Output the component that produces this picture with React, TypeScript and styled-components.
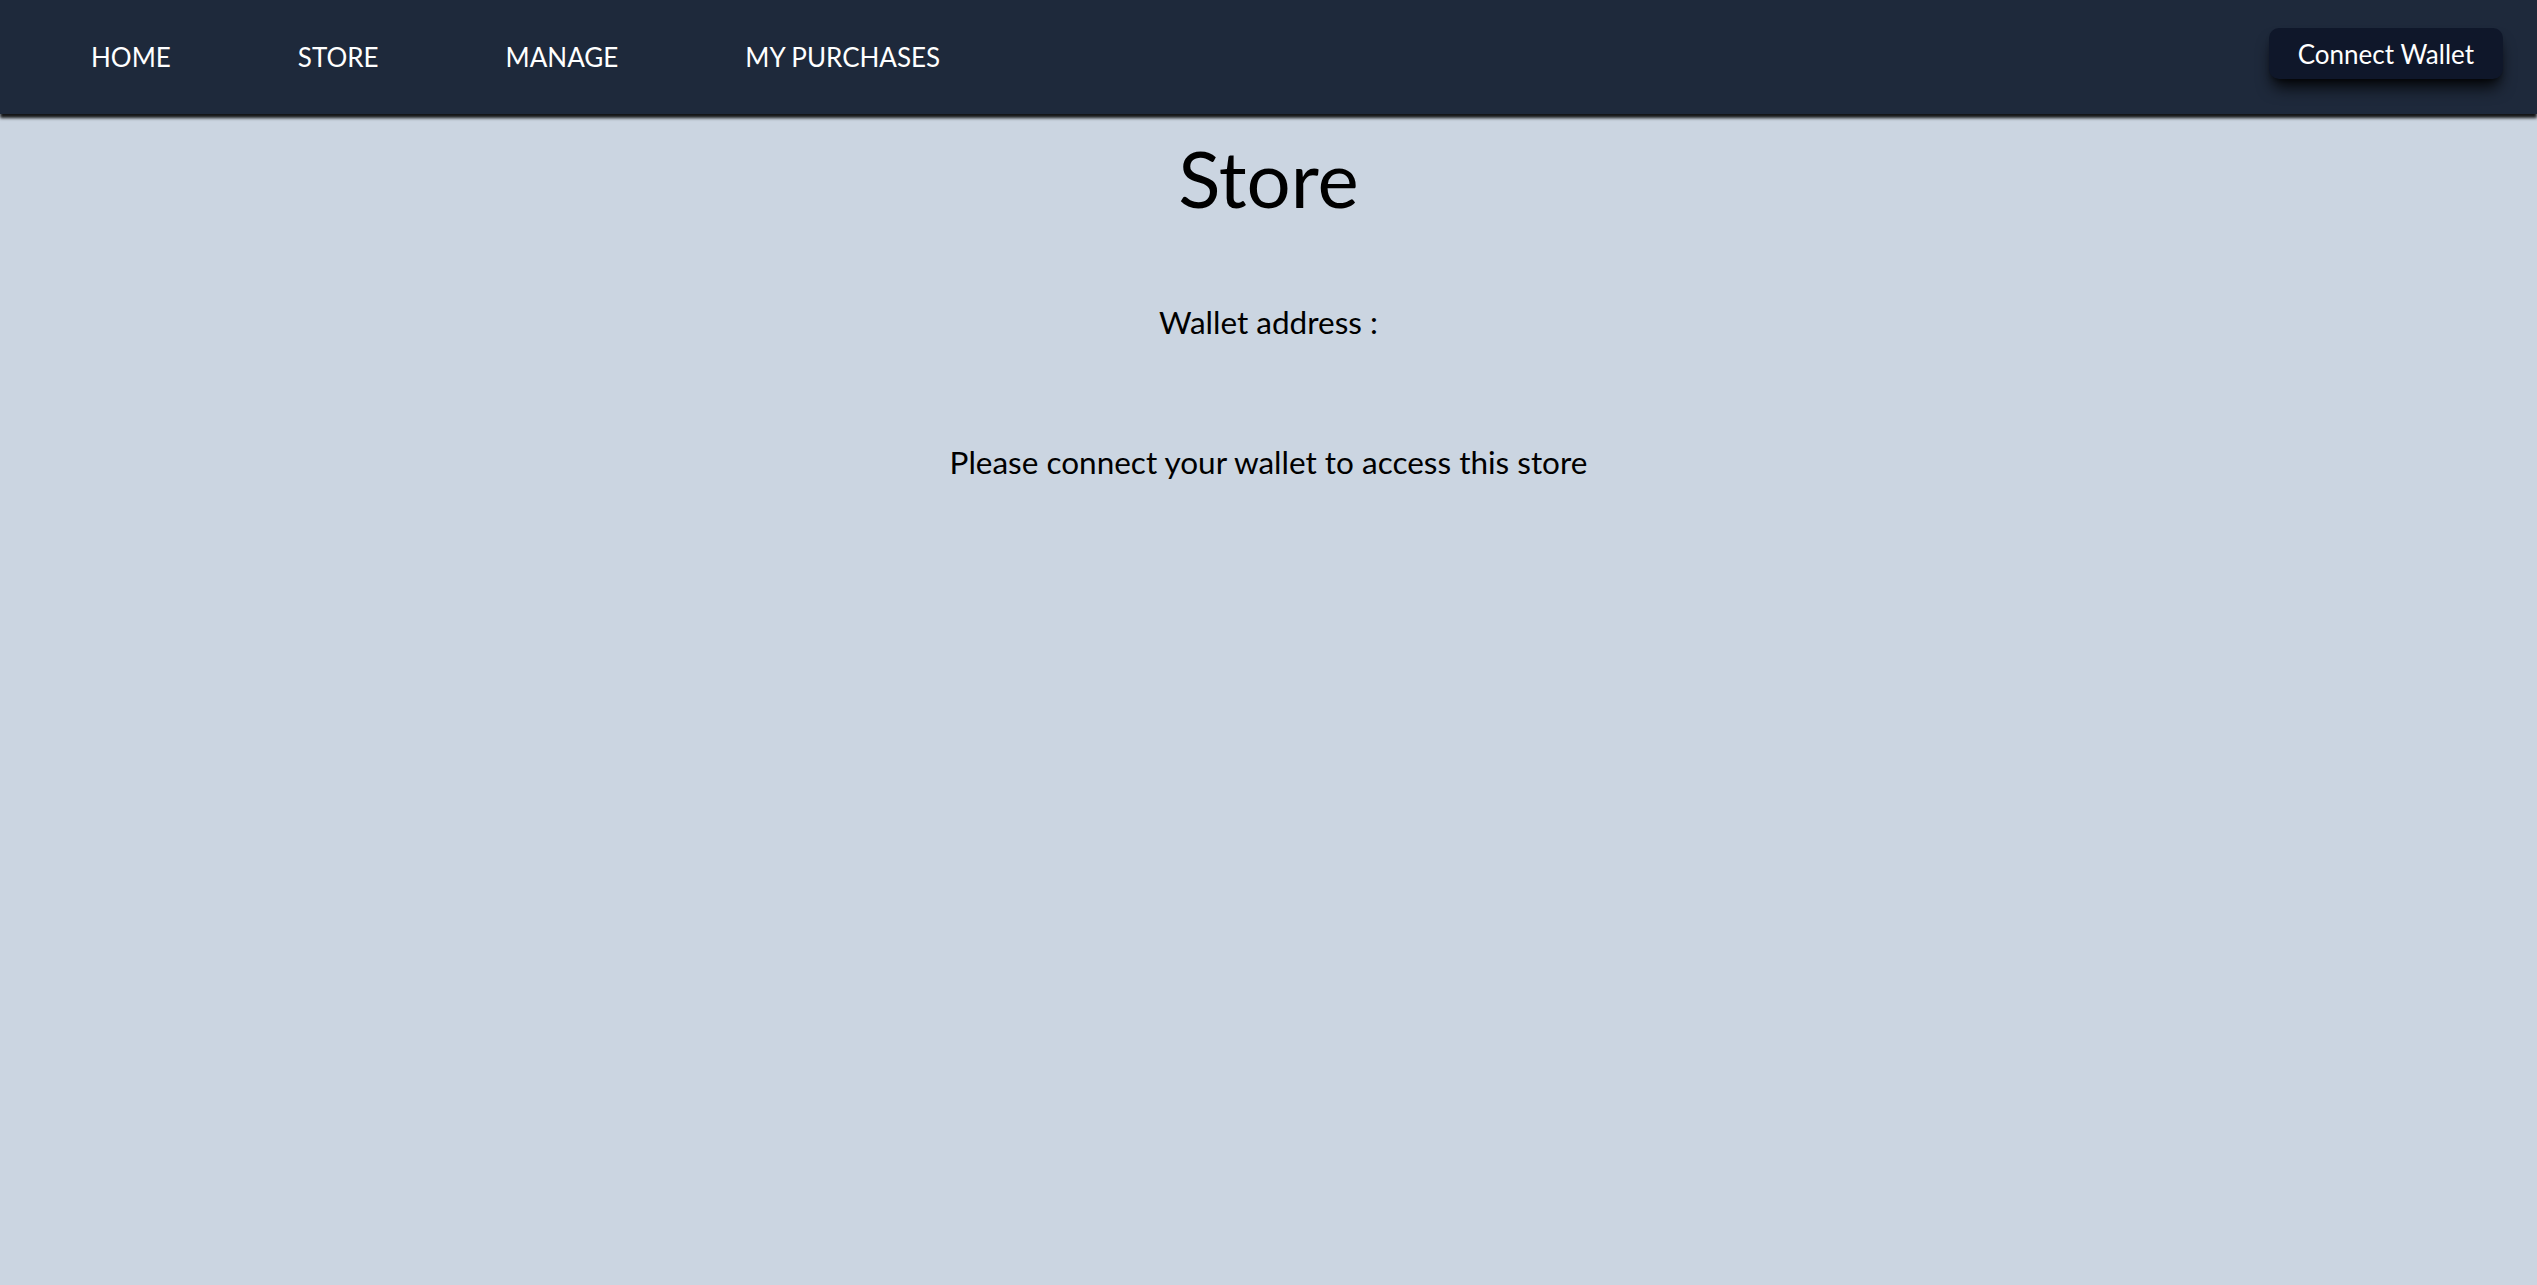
import styled, { createGlobalStyle } from "styled-components"

const GlobalStyle = createGlobalStyle`
body {
    margin: 0;
    background: #cbd5e1;
    font-family: Lato, "Open Sans", sans-serif;
    color: #000;
}
`

const Frame = styled.div`
min-height: 100vh;
display: flex;
flex-direction: column;
`

const Nav = styled.nav`
height: 114px;
background: #1e293b;
display: flex;
align-items: center;
justify-content: space-between;
padding: 0 34px 0 91px;
box-shadow: 0 4px 3px rgba(0, 0, 0, 0.9);
position: relative;
z-index: 1;
`

const NavLinks = styled.div`
display: flex;
gap: 127px;
`

const NavLink = styled.a`
color: #fff;
font-size: 26px;
text-decoration: none;
text-transform: uppercase;
cursor: pointer;
`

const ConnectButton = styled.button`
align-self: flex-start;
margin-top: 28px;
height: 51px;
padding: 0 29px;
background: #0f172a;
color: #fff;
border: none;
border-radius: 10px;
font-family: inherit;
font-size: 26px;
box-shadow: 0 12px 16px -4px rgba(0, 0, 0, 0.85), 0 4px 6px -4px rgba(0, 0, 0, 0.8);
cursor: pointer;
`

const Main = styled.main`
display: flex;
flex-direction: column;
align-items: center;
`

const Title = styled.h1`
font-size: 78px;
font-weight: 400;
margin: 18px 0 0;
line-height: 1.2;
`

const Text = styled.p`
font-size: 31.5px;
margin: ${(p: { $top: number }) => p.$top}px 0 0;
line-height: 1.2;
`

export default function App() {
    const links = ["Home", "Store", "Manage", "My Purchases"]

    return (
        <Frame>
            <GlobalStyle />
            <Nav>
                <NavLinks>
                    {links.map((link) => <NavLink key={link}>{link}</NavLink>)}
                </NavLinks>
                <ConnectButton>Connect Wallet</ConnectButton>
            </Nav>
            <Main>
                <Title>Store</Title>
                <Text $top={78}>Wallet address :</Text>
                <Text $top={103}>Please connect your wallet to access this store</Text>
            </Main>
        </Frame>
    )
}
